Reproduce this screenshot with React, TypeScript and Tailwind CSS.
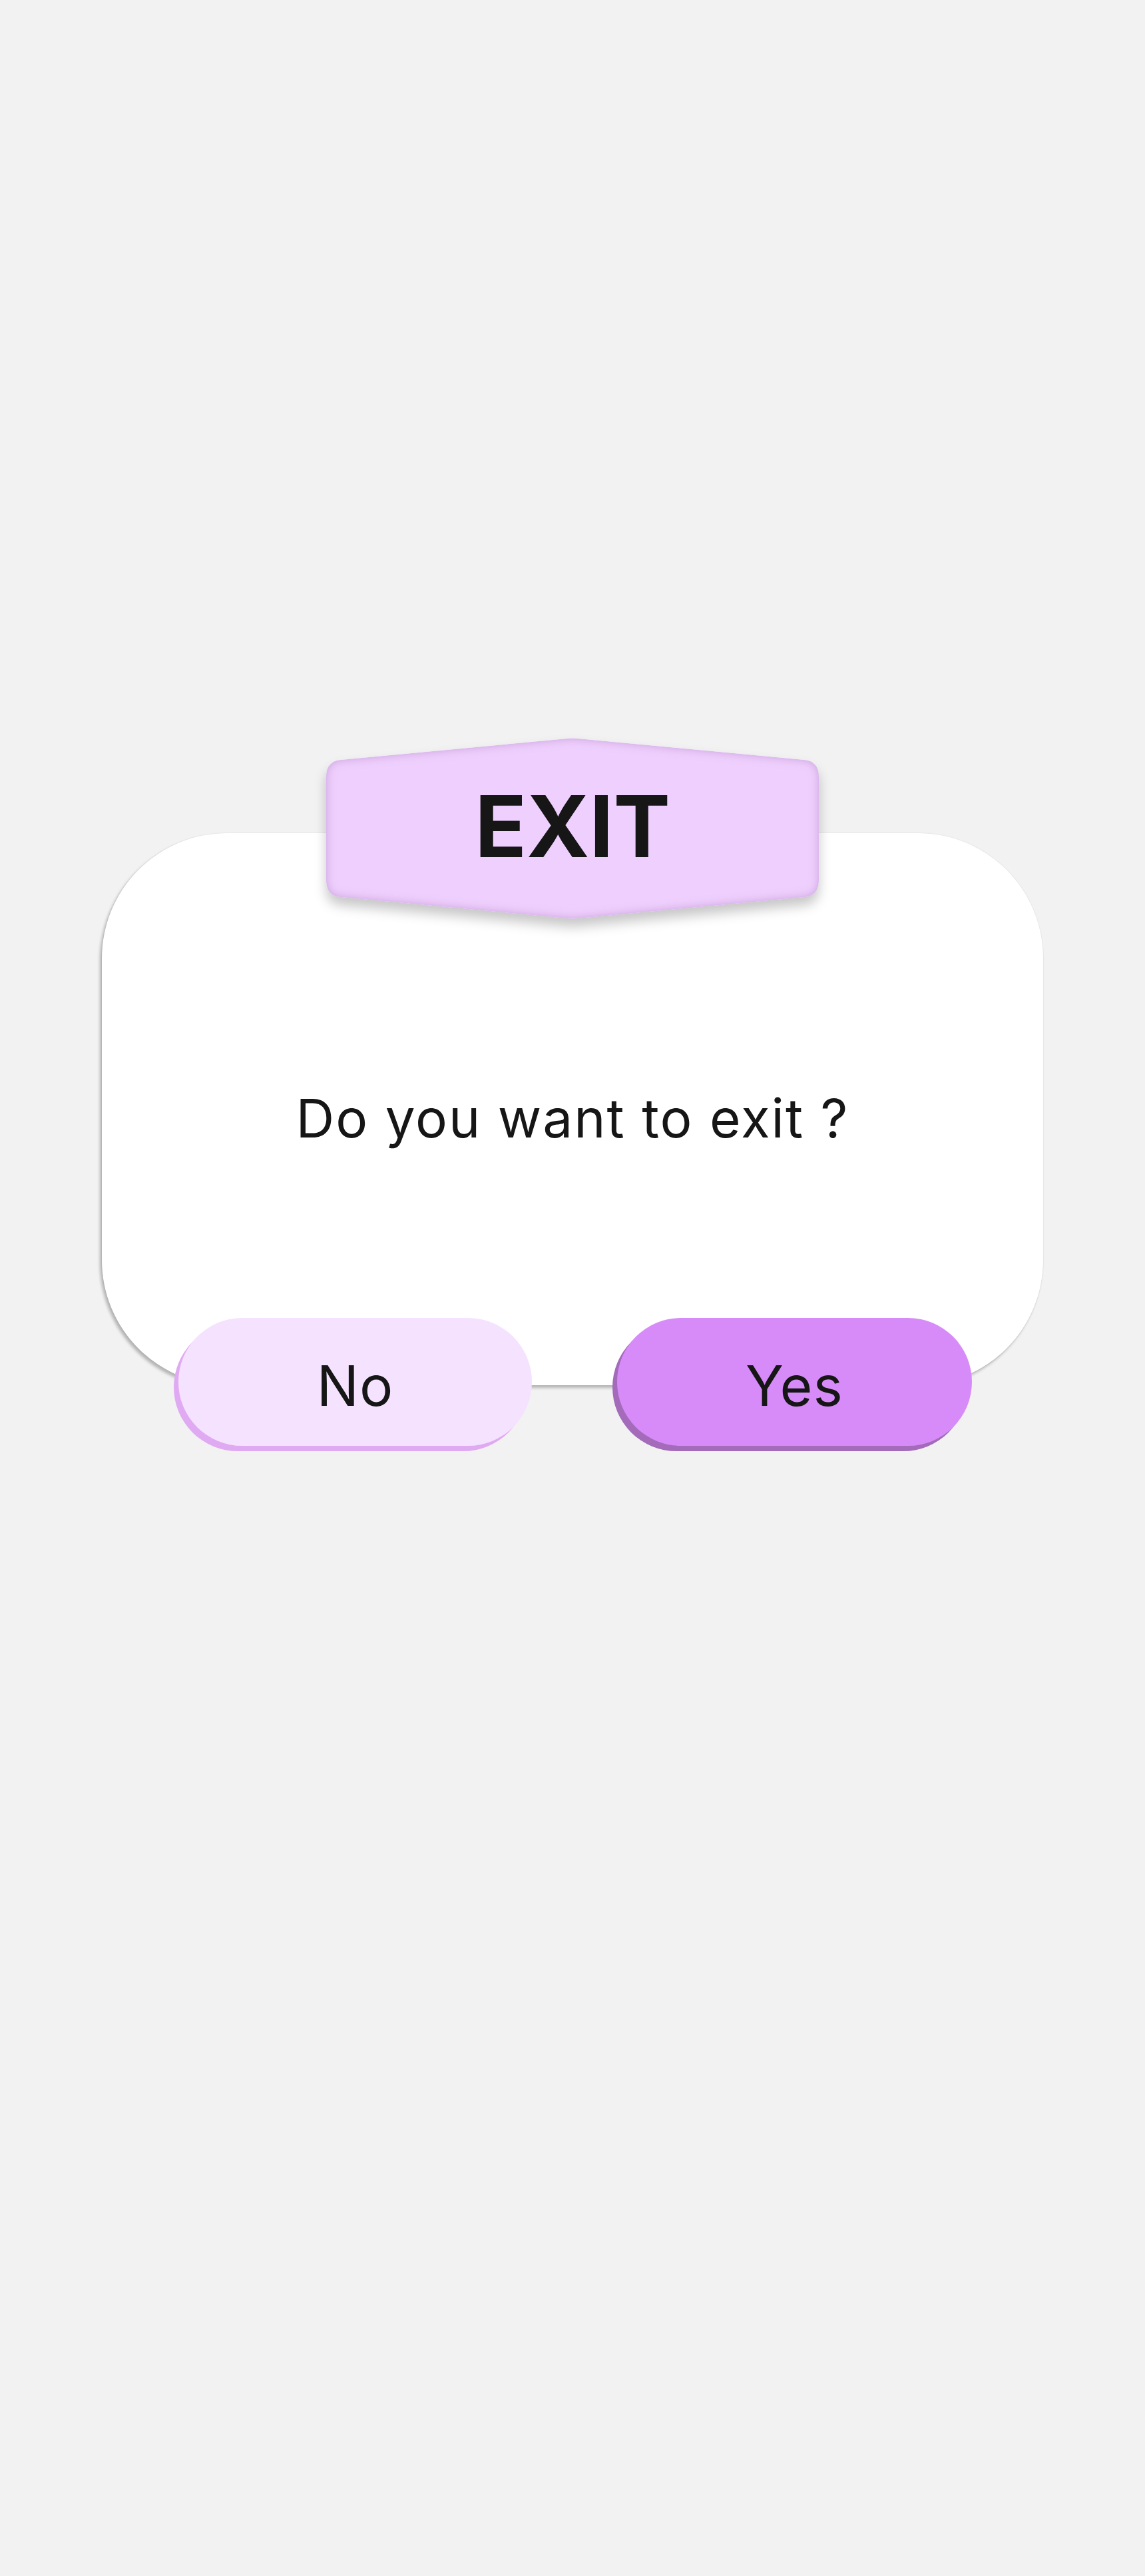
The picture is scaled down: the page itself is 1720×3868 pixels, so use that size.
import React from 'react';

const font = { fontFamily: 'Inter, "Noto Sans", sans-serif' };

const Badge: React.FC = () => (
  <div className="relative z-10 w-[740px] h-[272px] flex items-center justify-center">
    <svg
      className="absolute inset-0 drop-shadow-[0_12px_9px_rgba(0,0,0,0.22)]"
      width="740"
      height="272"
      viewBox="0 0 740 272"
    >
      <defs>
        <filter id="inner" x="-5%" y="-5%" width="110%" height="110%">
          <feGaussianBlur in="SourceAlpha" stdDeviation="7" result="blur" />
          <feComposite in="SourceAlpha" in2="blur" operator="arithmetic" k2="1" k3="-1" result="edge" />
          <feFlood floodColor="#b985cf" floodOpacity="0.75" />
          <feComposite in2="edge" operator="in" result="shade" />
          <feMerge>
            <feMergeNode in="SourceGraphic" />
            <feMergeNode in="shade" />
          </feMerge>
        </filter>
      </defs>
      <path
        d="M 362 1 Q 370 0 378 1 L 718 33 Q 740 35 740 58 L 740 214 Q 740 237 718 239 L 378 271 Q 370 272 362 271 L 22 239 Q 0 237 0 214 L 0 58 Q 0 35 22 33 Z"
        fill="#eecffd"
        filter="url(#inner)"
      />
    </svg>
    <span className="relative text-[128px] font-bold leading-none text-[#161616] -mt-[6px]" style={font}>
      EXIT
    </span>
  </div>
);

const App: React.FC = () => {
  return (
    <div className="w-[1720px] h-[3868px] bg-[#f2f2f2] flex flex-col items-center pt-[1108px]" style={font}>
      <Badge />
      <div className="-mt-[129px] w-[1414px] h-[829px] bg-white rounded-[188px] shadow-[-3px_4px_4px_rgba(0,0,0,0.25),0_0_2px_rgba(0,0,0,0.12)] flex flex-col">
        <div className="flex-1 flex items-center justify-center pt-[128px]">
          <p className="text-[80px] leading-none tracking-[2px] text-[#161616]">Do you want to exit ?</p>
        </div>
        <div className="-mb-[91px] flex justify-between pl-[115px] pr-[107px]">
          <button className="w-[531px] h-[192px] rounded-full bg-[#f5e2fe] shadow-[-7px_8px_0_#e0aaf2] text-[84px] tracking-[1px] text-[#161616] flex items-center justify-center pt-[12px]">
            No
          </button>
          <button className="w-[533px] h-[192px] rounded-full bg-[#d78bf8] shadow-[-7px_8px_0_#a36bba] text-[84px] tracking-[1px] text-[#161616] flex items-center justify-center pt-[12px]">
            Yes
          </button>
        </div>
      </div>
    </div>
  );
};

export default App;
